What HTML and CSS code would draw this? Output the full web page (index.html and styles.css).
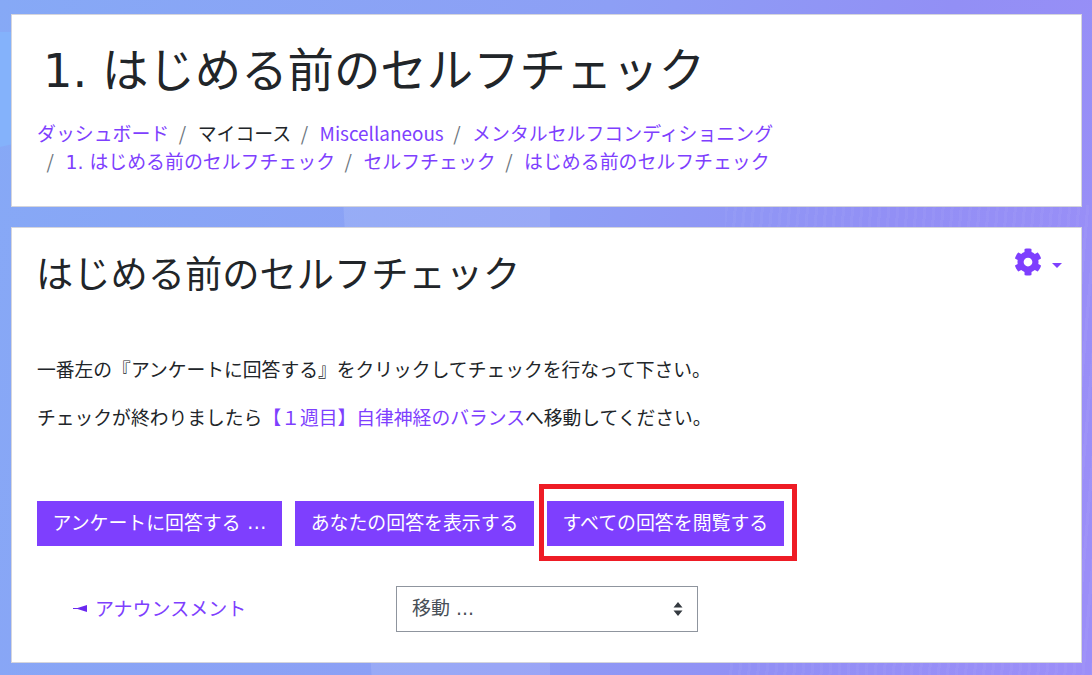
FILE: index.html
```html
<!DOCTYPE html>
<html lang="ja">
<head>
<meta charset="utf-8">
<title>はじめる前のセルフチェック</title>
<link rel="stylesheet" href="styles.css">
</head>
<body>
<div class="bg-shape bg-left"></div>
<div class="bg-shape bg-band"></div>
<div class="bg-shape bg-right"></div>
<main class="page">
  <header class="card page-header">
    <h1 class="course-title"><span class="latin">1. </span>はじめる前のセルフチェック</h1>
    <ol class="breadcrumb">
      <li><a href="#">ダッシュボード</a></li>
      <li>マイコース</li>
      <li><a href="#">Miscellaneous</a></li>
      <li><a href="#">メンタルセルフコンディショニング</a></li>
      <li><a href="#"><span class="latin">1. </span>はじめる前のセルフチェック</a></li>
      <li><a href="#">セルフチェック</a></li>
      <li><a href="#">はじめる前のセルフチェック</a></li>
    </ol>
  </header>
  <section class="card content">
    <div class="content-head">
      <h2 class="activity-title">はじめる前のセルフチェック</h2>
      <a class="action-menu" href="#" aria-label="設定">
        <svg class="gear" viewBox="0 0 512 512" aria-hidden="true"><path d="M487.4 315.7l-42.6-24.6c4.3-23.2 4.3-47 0-70.2l42.6-24.6c4.9-2.8 7.1-8.6 5.5-14-11.1-35.6-30-67.8-54.7-94.6-3.8-4.1-10-5.1-14.8-2.3L380.8 110c-17.9-15.4-38.5-27.3-60.8-35.1V25.8c0-5.6-3.9-10.5-9.4-11.7-36.7-8.2-74.3-7.8-109.2 0-5.5 1.2-9.4 6.1-9.4 11.7V75c-22.2 7.9-42.8 19.8-60.8 35.1L88.7 85.5c-4.9-2.8-11-1.9-14.8 2.3-24.7 26.7-43.6 58.9-54.7 94.6-1.7 5.4.6 11.2 5.5 14L67.3 221c-4.3 23.2-4.3 47 0 70.2l-42.6 24.6c-4.9 2.8-7.1 8.6-5.5 14 11.1 35.6 30 67.8 54.7 94.6 3.8 4.1 10 5.1 14.8 2.3l42.6-24.6c17.9 15.4 38.5 27.3 60.8 35.1v49.2c0 5.6 3.9 10.5 9.4 11.7 36.7 8.2 74.3 7.8 109.2 0 5.5-1.2 9.4-6.1 9.4-11.7v-49.2c22.2-7.9 42.8-19.8 60.8-35.1l42.6 24.6c4.9 2.8 11 1.9 14.8-2.3 24.7-26.7 43.6-58.9 54.7-94.6 1.5-5.5-.7-11.3-5.6-14.1zM256 336c-44.1 0-80-35.9-80-80s35.9-80 80-80 80 35.9 80 80-35.9 80-80 80z"/></svg>
        <span class="caret"></span>
      </a>
    </div>
    <div class="intro">
      <p>一番左の『アンケートに回答する』をクリックしてチェックを行なって下さい。</p>
      <p>チェックが終わりましたら<a href="#">【１週目】自律神経のバランス</a>へ移動してください。</p>
    </div>
    <div class="buttons">
      <a class="btn" href="#">アンケートに回答する<span class="latin btn-dots"> ...</span></a>
      <a class="btn" href="#">あなたの回答を表示する</a>
      <a class="btn btn-marked" href="#">すべての回答を閲覧する</a>
    </div>
    <nav class="activity-nav">
      <a class="prev-link" href="#">
        <svg class="prev-arrow" viewBox="0 0 14 7" aria-hidden="true"><path d="M0 3h4.5L14 0v7L4.500 4H0z"/></svg>
        <span>アナウンスメント</span>
      </a>
      <div class="jump">
        <select class="jump-select" aria-label="移動">
          <option>移動 ...</option>
        </select>
        <svg class="jump-arrows" viewBox="0 0 10 14" aria-hidden="true"><path d="M5 0l4.500 5.600h-9zM5 14L.5 8.400h9z"/></svg>
      </div>
    </nav>
  </section>
</main>
</body>
</html>
```
FILE: styles.css
```css
* { box-sizing: border-box; }

html, body { height: 100%; }

body {
  margin: 0;
  overflow: hidden;
  position: relative;
  font-family: "Noto Sans CJK JP", "Noto Sans", sans-serif;
  font-size: 18.75px;
  line-height: 28px;
  color: #212529;
  background: linear-gradient(105deg, #86a9f6 0%, #8d9ff5 48%, #928ff5 75%, #9c8ef8 100%);
}

a { color: #7e3ffe; text-decoration: none; }

.latin { font-family: "DejaVu Sans", sans-serif; white-space: pre; }

.bg-shape { position: absolute; pointer-events: none; }

.bg-left {
  left: 0;
  top: 32px;
  width: 300px;
  height: 115px;
  background: #84b2fb;
  clip-path: polygon(0 0, 100% 0, 100% 40%, 0 100%);
}

.bg-band {
  left: 340px;
  top: 150px;
  width: 210px;
  height: 525px;
  background: rgba(255, 255, 255, 0.11);
  clip-path: polygon(0 0, 100% 0, 100% 100%, 15% 100%);
}

.bg-right {
  left: 725px;
  top: 205px;
  width: 367px;
  height: 470px;
  background: repeating-linear-gradient(95deg, rgba(255, 255, 255, 0.035) 0 3px, rgba(255, 255, 255, 0) 3px 9px);
}

.page {
  position: relative;
  display: flex;
  flex-direction: column;
  gap: 20px;
  padding: 14px 10px 0 11px;
}

.card {
  background: #fff;
  border: 1px solid #d5d5dc;
}

.page-header {
  height: 193px;
  padding: 22px 25px 0 25px;
}

.course-title {
  margin: 0 0 0 6px;
  font-size: 46.4px;
  font-weight: 400;
  line-height: 60px;
}

.breadcrumb {
  display: flex;
  flex-wrap: wrap;
  width: 780px;
  margin: 18px 0 0;
  padding: 0;
  list-style: none;
  font-size: 18.9px;
}

.breadcrumb li + li::before {
  content: "/";
  color: #6c757d;
  padding: 0 11.5px 0 9.5px;
}

.content {
  height: 436px;
  padding: 0 19px 0 25px;
}

.content-head {
  display: flex;
  justify-content: space-between;
  align-items: flex-start;
  padding-top: 20px;
}

.activity-title {
  margin: 0 0 0 -1px;
  font-size: 37.25px;
  font-weight: 400;
  line-height: 48px;
}

.action-menu {
  display: flex;
  align-items: flex-start;
  gap: 10px;
}

.gear {
  width: 28px;
  height: 28px;
  fill: currentColor;
}

.caret {
  width: 0;
  height: 0;
  margin-top: 15px;
  border-style: solid;
  border-width: 5px 5px 0;
  border-color: #7e3ffe transparent transparent;
}

.intro {
  margin-top: 59px;
  font-size: 18.8px;
}

.intro p { margin: 0 0 20px; }

.buttons {
  display: flex;
  gap: 13px;
  margin-top: 70px;
  font-size: 18.9px;
}

.btn {
  display: flex;
  align-items: center;
  height: 45px;
  padding: 0 15.5px 3px;
  color: #fff;
  background: #7e3ffe;
  white-space: nowrap;
}

.btn-dots { letter-spacing: 0.5px; }

.btn-marked { position: relative; }

.btn-marked::after {
  content: "";
  position: absolute;
  inset: -17px -13px -15px -8px;
  border: 5px solid #ee1c25;
}

.activity-nav {
  display: flex;
  align-items: center;
  margin-top: 40px;
  padding-left: 36px;
  font-size: 19px;
}

.prev-link {
  display: flex;
  align-items: center;
  gap: 8px;
  width: 323px;
  padding-bottom: 2px;
}

.prev-arrow {
  width: 14px;
  height: 7px;
  fill: #6a28f0;
}

.jump {
  position: relative;
  width: 302px;
  height: 46px;
}

.jump-select {
  display: block;
  width: 100%;
  height: 100%;
  padding: 0 15px 2px;
  border: 1px solid #8f959e;
  border-radius: 0;
  appearance: none;
  background: #fff;
  color: #495057;
  font: inherit;
  font-family: "DejaVu Sans", "Noto Sans CJK JP", sans-serif;
}

.jump-arrows {
  position: absolute;
  right: 15px;
  top: 16px;
  width: 10px;
  height: 14px;
  fill: #343a40;
}
```
